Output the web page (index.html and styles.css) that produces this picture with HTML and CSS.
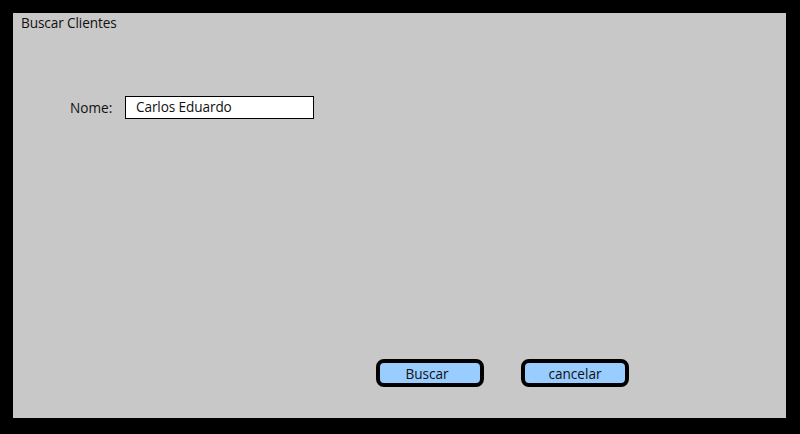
FILE: index.html
```html
<!DOCTYPE html>
<html lang="pt">
<head>
<meta charset="utf-8">
<title>Buscar Clientes</title>
<link rel="stylesheet" href="styles.css">
</head>
<body>
<div class="window">
  <div class="title">Buscar Clientes</div>
  <div class="field-row">
    <label class="label" for="nome">Nome:</label>
    <div class="input" id="nome">Carlos Eduardo</div>
  </div>
  <div class="spacer"></div>
  <div class="actions">
    <button class="btn btn-left">Buscar</button>
    <button class="btn">cancelar</button>
  </div>
</div>
</body>
</html>
```

FILE: styles.css
```css
html, body {
  margin: 0;
  padding: 0;
  background: #000;
  width: 800px;
  height: 434px;
  overflow: hidden;
}
body {
  font-family: "Open Sans", "Noto Sans", sans-serif;
  font-size: 13.6px;
  color: #111;
}
.window {
  box-sizing: border-box;
  margin: 13px 14px 0 13px;
  width: 773px;
  height: 405px;
  background: #c8c8c8;
  display: flex;
  flex-direction: column;
  padding: 0 0 31px 0;
}
.title {
  padding: 0 0 0 8px;
  line-height: 19px;
  letter-spacing: -0.1px;
}
.field-row {
  display: flex;
  align-items: center;
  margin-top: 64px;
  padding-left: 57px;
}
.label {
  width: 55px;
}
.input {
  box-sizing: border-box;
  width: 189px;
  height: 23px;
  border: 1px solid #000;
  background: #fff;
  padding: 0 0 0 10px;
  line-height: 20px;
  letter-spacing: -0.1px;
}
.spacer { flex: 1; }
.actions {
  display: flex;
  gap: 37px;
  padding-left: 363px;
}
.btn {
  box-sizing: border-box;
  width: 108px;
  height: 28px;
  border: 4px solid #000;
  border-radius: 8px;
  background: #99ccff;
  font-family: inherit;
  font-size: 13.6px;
  color: #111;
  padding: 0;
  line-height: 19px;
}
.btn-left {
  padding-right: 6px;
}
```
